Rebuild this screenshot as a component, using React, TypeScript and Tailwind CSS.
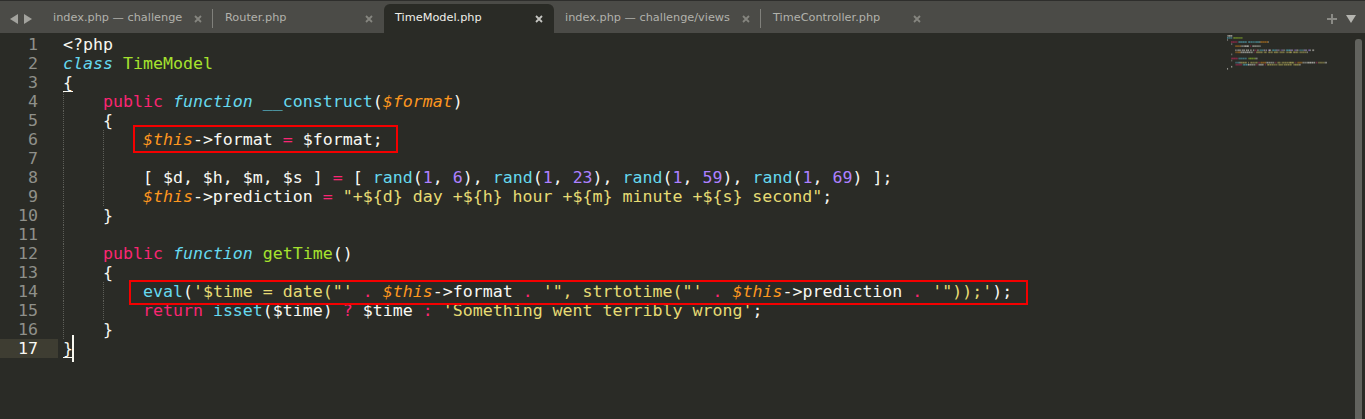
const mono = "font-['DejaVu_Sans_Mono','Liberation_Mono',monospace]";

const c = {
  w: "text-[#f8f8f2]",
  p: "text-[#f92672]",
  b: "text-[#66d9ef]",
  g: "text-[#a6e22e]",
  o: "text-[#fd971f]",
  y: "text-[#e6db74]",
  v: "text-[#ae81ff]",
};

const miniColor: Record<keyof typeof c, string> = {
  w: "#b4b4ae",
  p: "#b22a58",
  b: "#4f9aa9",
  g: "#7fa52c",
  o: "#b8761f",
  y: "#a9a258",
  v: "#8469bd",
};

type Seg = [string, keyof typeof c, boolean?];
const lines: Seg[][] = [
  [["<?php", "w"]],
  [["class", "b", true], [" ", "w"], ["TimeModel", "g"]],
  [["{", "w"]],
  [["    ", "w"], ["public", "p"], [" ", "w"], ["function", "b", true], [" ", "w"], ["__construct", "b"], ["(", "w"], ["$format", "o", true], [")", "w"]],
  [["    {", "w"]],
  [["        ", "w"], ["$this", "o", true], ["->format ", "w"], ["=", "p"], [" $format;", "w"]],
  [],
  [["        [ $d, $h, $m, $s ] ", "w"], ["=", "p"], [" [ ", "w"], ["rand", "b"], ["(", "w"], ["1", "v"], [", ", "w"], ["6", "v"], ["), ", "w"], ["rand", "b"], ["(", "w"], ["1", "v"], [", ", "w"], ["23", "v"], ["), ", "w"], ["rand", "b"], ["(", "w"], ["1", "v"], [", ", "w"], ["59", "v"], ["), ", "w"], ["rand", "b"], ["(", "w"], ["1", "v"], [", ", "w"], ["69", "v"], [") ];", "w"]],
  [["        ", "w"], ["$this", "o", true], ["->prediction ", "w"], ["=", "p"], [" ", "w"], ['"+${d} day +${h} hour +${m} minute +${s} second"', "y"], [";", "w"]],
  [["    }", "w"]],
  [],
  [["    ", "w"], ["public", "p"], [" ", "w"], ["function", "b", true], [" ", "w"], ["getTime", "g"], ["()", "w"]],
  [["    {", "w"]],
  [["        ", "w"], ["eval", "b"], ["(", "w"], ["'$time = date(\"'", "y"], [" ", "w"], [".", "p"], [" ", "w"], ["$this", "o", true], ["->format ", "w"], [".", "p"], [" ", "w"], ["'\", strtotime(\"'", "y"], [" ", "w"], [".", "p"], [" ", "w"], ["$this", "o", true], ["->prediction ", "w"], [".", "p"], [" ", "w"], ["'\"));'", "y"], [");", "w"]],
  [["        ", "w"], ["return", "p"], [" ", "w"], ["isset", "b"], ["($time) ", "w"], ["?", "p"], [" $time ", "w"], [":", "p"], [" ", "w"], ["'Something went terribly wrong'", "y"], [";", "w"]],
  [["    }", "w"]],
  [["}", "w"]],
];

const guideRows: Record<number, number[]> = {
  3: [0], 4: [0], 5: [0, 1], 6: [0, 1], 7: [0, 1], 8: [0, 1], 9: [0], 10: [0], 11: [0], 12: [0],
  13: [0, 1], 14: [0, 1], 15: [0],
};

function Tab({ label, active, sep, cls }: { label: string; active?: boolean; sep?: boolean; cls: string }) {
  return (
    <div className={`relative flex h-[29px] shrink-0 items-center justify-between pr-[11px] ${cls} ${active ? "rounded-t-[6px] bg-[#2a2b26] text-[#f0f0ea]" : "text-[#b2b2ac]"}`}>
      <span className="whitespace-nowrap">{label}</span>
      <svg width="8" height="8" viewBox="0 0 8 8">
        <path d="M1 1l6 6M7 1l-6 6" stroke={active ? "#c4c4c0" : "#85857f"} strokeWidth="1.8" />
      </svg>
      {sep && <span className="absolute right-0 top-[5px] h-[19px] w-px bg-[#80807b]" />}
    </div>
  );
}

function Minimap() {
  return (
    <svg width="110" height="36" className="shrink-0">
      {lines.map((segs, y) => {
        let x = 0;
        return segs.flatMap(([t, col], j) =>
          t.split("").map((ch, k) => {
            const px = x;
            x += 1.05;
            if (ch === " ") return null;
            const op = 0.45 + (((px * 7 + y * 13) | 0) % 5) * 0.1;
            return <rect key={`${y}-${j}-${k}`} x={px} y={y * 2.06} width={1.05} height={1.7} fill={miniColor[col]} opacity={op} />;
          })
        );
      })}
    </svg>
  );
}

export default function App() {
  return (
    <div className="flex h-[419px] w-[1365px] flex-col overflow-hidden bg-[#2a2b26]">
      <div className="h-[1px] shrink-0 bg-[#2e2e2c]" />
      <div className="flex h-[32px] shrink-0 items-end bg-[#4b4b47] pr-[9px] font-['DejaVu_Sans',sans-serif] text-[11.3px]">
        <div className="flex h-[29px] w-[42px] shrink-0 items-center gap-[6px] pl-[10px]">
          <svg width="8" height="10" viewBox="0 0 8 10"><path d="M8 0v10L0 5z" fill="#a3a39e" /></svg>
          <svg width="8" height="10" viewBox="0 0 8 10"><path d="M0 0v10l8-5z" fill="#a3a39e" /></svg>
        </div>
        <Tab label="index.php — challenge" sep cls="w-[171px] pl-[11px]" />
        <Tab label="Router.php" cls="w-[171px] pl-[12px]" />
        <Tab label="TimeModel.php" active cls="w-[170px] pl-[11px]" />
        <Tab label="index.php — challenge/views" sep cls="w-[207px] pl-[11px]" />
        <Tab label="TimeController.php" cls="w-[171px] pl-[12px]" />
        <div className="flex-1" />
        <div className="flex h-[29px] items-center gap-[9px]">
          <svg width="10" height="10" viewBox="0 0 10 10"><path d="M4 0h2v4h4v2H6v4H4V6H0V4h4z" fill="#8a8a85" /></svg>
          <svg width="10" height="8" viewBox="0 0 10 8"><path d="M0 0h10L5 8z" fill="#b5b5b0" /></svg>
        </div>
      </div>
      <div className={`relative flex min-h-0 flex-1 pt-[2px] ${mono} text-[16.6px] leading-[19px]`}>
        <div className="w-[58px] shrink-0 text-right text-[#8f908a]">
          {lines.map((_, i) => (
            <div key={i} className={`h-[19px] pr-[20px] ${i === 16 ? "bg-[#3e3d32] text-[#f8f8f2]" : ""}`}>{i + 1}</div>
          ))}
        </div>
        <div className="relative ml-[5px] flex-1">
          {lines.map((segs, i) => (
            <div key={i} className="relative h-[19px] whitespace-pre">
              {(guideRows[i] ?? []).map((g) => (
                <span key={g} className={`absolute top-0 h-full border-l border-dotted border-[#5d5e58] ${g === 0 ? "left-0" : "left-[40px]"}`} />
              ))}
              {i === 2 && <span className="absolute left-0 top-[18px] h-px w-[10px] bg-[#f8f8f2]" />}
              {i === 16 && (
                <>
                  <span className="absolute left-0 top-[18px] h-px w-[10px] bg-[#f8f8f2]" />
                  <span className="absolute left-[9px] top-[-4px] h-[27px] w-[2px] bg-[#f8f8f0]" />
                </>
              )}
              <span className="relative">
                {segs.map(([t, col, it], j) => (
                  <span key={j} className={`${c[col]} ${it ? "italic" : ""}`}>{t}</span>
                ))}
              </span>
            </div>
          ))}
          <div className="absolute left-[70px] top-[90px] h-[28px] w-[265px] border-2 border-[#f40000]" />
          <div className="absolute left-[66px] top-[245px] h-[25px] w-[899px] border-2 border-[#f40000]" />
        </div>
        <div className="flex w-[139px] shrink-0 justify-between pl-[1px] pr-[3px]">
          <Minimap />
          <div className="mt-[4px] h-[380px] w-[7px] rounded-t-[3px] bg-[#62635e]" />
        </div>
      </div>
    </div>
  );
}
